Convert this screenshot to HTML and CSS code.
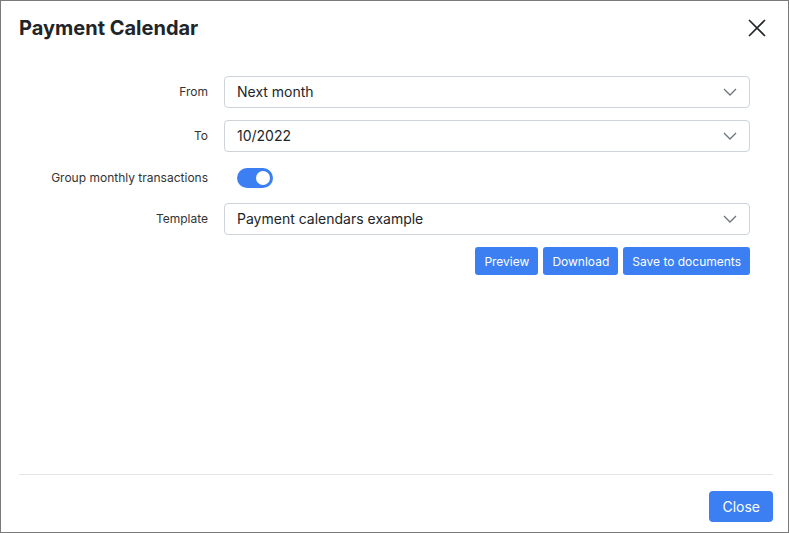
FILE: index.html
```html
<!DOCTYPE html>
<html>
<head>
<meta charset="utf-8">
<link rel="stylesheet" href="styles.css">
</head>
<body>
<div class="modal">
  <div class="modal-header">
    <h1 class="title">Payment Calendar</h1>
    <button class="close-x" aria-label="Close">
      <svg width="18" height="18" viewBox="0 0 18 18"><path d="M1 1L17 17M17 1L1 17" stroke="#212529" stroke-width="1.6" fill="none"/></svg>
    </button>
  </div>
  <div class="modal-body">
    <div class="form">
      <label class="label">From</label>
      <div class="select"><span>Next month</span><svg class="chev" width="14" height="8" viewBox="0 0 14 8"><path d="M1 1L7 7L13 1" stroke="#6c757d" stroke-width="1.3" fill="none"/></svg></div>
      <label class="label">To</label>
      <div class="select"><span>10/2022</span><svg class="chev" width="14" height="8" viewBox="0 0 14 8"><path d="M1 1L7 7L13 1" stroke="#6c757d" stroke-width="1.3" fill="none"/></svg></div>
      <label class="label">Group monthly transactions</label>
      <div class="toggle-cell"><span class="toggle"><span class="knob"></span></span></div>
      <label class="label">Template</label>
      <div class="select"><span>Payment calendars example</span><svg class="chev" width="14" height="8" viewBox="0 0 14 8"><path d="M1 1L7 7L13 1" stroke="#6c757d" stroke-width="1.3" fill="none"/></svg></div>
      <div></div>
      <div class="actions">
        <button class="btn">Preview</button>
        <button class="btn">Download</button>
        <button class="btn">Save to documents</button>
      </div>
    </div>
  </div>
  <div class="modal-footer">
    <button class="btn btn-lg">Close</button>
  </div>
</div>
</body>
</html>
```

FILE: styles.css
```css
* { box-sizing: border-box; }
html, body { margin: 0; padding: 0; background: #fff; }
body { font-family: Inter, "Noto Sans", sans-serif; color: #212529; }
.modal {
  width: 789px;
  height: 533px;
  border: 1px solid #7a7a7a;
  display: flex;
  flex-direction: column;
}
.modal-header {
  height: 54px;
  display: flex;
  align-items: center;
  justify-content: space-between;
  padding: 0 22px 0 18px;
}
.title {
  margin: 0;
  font-size: 20px;
  font-weight: 700;
  color: #212529;
  letter-spacing: 0;
}
.close-x {
  border: 0;
  background: transparent;
  padding: 0;
  width: 18px;
  height: 18px;
  display: flex;
}
.modal-body {
  flex: 1;
  padding: 21px 38px 0 18px;
}
.form {
  display: grid;
  grid-template-columns: 189px 1fr;
  column-gap: 16px;
  row-gap: 12px;
  align-items: center;
}
.label {
  text-align: right;
  font-size: 12px;
  color: #333;
  margin-top: -1px;
}
.select {
  height: 32px;
  border: 1px solid #ced4da;
  border-radius: 4px;
  padding: 0 12px;
  display: flex;
  align-items: center;
  justify-content: space-between;
  font-size: 14px;
  color: #212529;
}
.select span { margin-top: -1px; }
.toggle-cell { height: 27px; display: flex; align-items: center; padding-left: 13px; }
.toggle {
  width: 36px;
  height: 20px;
  border-radius: 10px;
  background: #3b7ff2;
  position: relative;
  display: inline-block;
}
.knob {
  position: absolute;
  right: 3px;
  top: 3px;
  width: 14px;
  height: 14px;
  border-radius: 50%;
  background: #fff;
}
.actions {
  display: flex;
  justify-content: flex-end;
  gap: 5px;
}
.btn {
  font-family: Inter, "Noto Sans", sans-serif;
  background: #3b7ff2;
  color: #fff;
  border: 0;
  border-radius: 3px;
  height: 28px;
  padding: 0 9px;
  font-size: 12px;
}
.modal-footer {
  margin: 0 15px 0 18px;
  border-top: 1px solid #e5e5e5;
  padding: 16px 0 10px;
  display: flex;
  justify-content: flex-end;
}
.btn-lg {
  height: 31px;
  padding: 0 13px;
  font-size: 14px;
  border-radius: 4px;
}
```
